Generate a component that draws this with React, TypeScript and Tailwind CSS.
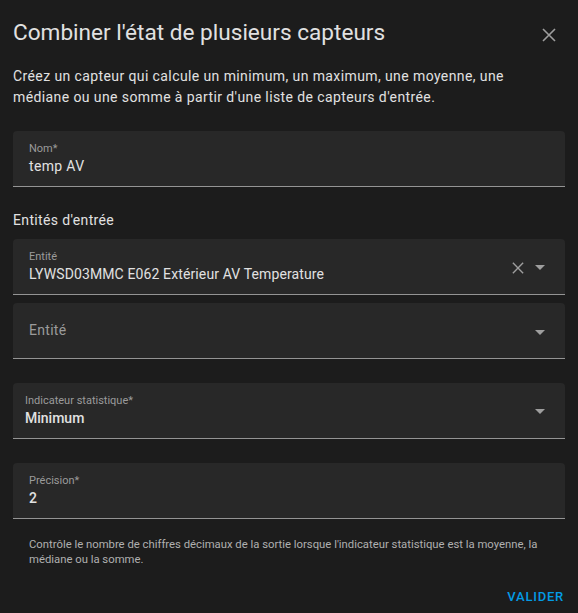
import React from "react";

const CloseIcon = ({ size = 14 }: { size?: number }) => (
  <svg width={size} height={size} viewBox="0 0 14 14">
    <path d="M1 1 L13 13 M13 1 L1 13" stroke="currentColor" strokeWidth="1.6" fill="none" />
  </svg>
);

const Caret = () => (
  <svg width="10" height="5" viewBox="0 0 10 5" className="text-[#9e9e9e]">
    <path d="M0 0 L10 0 L5 5 Z" fill="currentColor" />
  </svg>
);

export default function App() {
  return (
    <div
      className="w-[578px] h-[613px] bg-[#1c1c1c] text-[#e1e1e1] px-[13px] flex flex-col overflow-hidden"
      style={{ fontFamily: "Roboto, 'Noto Sans', sans-serif" }}
    >
      <div className="flex items-center justify-between h-[28px] mt-[19px]">
        <div className="text-[22.6px] leading-[28px] text-[#e1e1e1]">Combiner l'état de plusieurs capteurs</div>
        <div className="text-[#9e9e9e] mr-[9px] mt-[4px]">
          <CloseIcon size={14} />
        </div>
      </div>

      <div className="mt-[19px] pr-[16px] text-[14px] leading-[21px] tracking-[0.4px] text-[#e1e1e1]">
        Créez un capteur qui calcule un minimum, un maximum, une moyenne, une médiane ou une somme à partir d'une liste de capteurs d'entrée.
      </div>

      {/* Nom */}
      <div className="mt-[23px] h-[56px] bg-[#282828] rounded-t-[4px] border-b border-[#949494] relative">
        <div className="absolute left-[16px] top-[10px] text-[11px] leading-[16px] text-[#9b9b9b]">Nom*</div>
        <div className="absolute left-[16px] top-[23px] text-[14px] leading-[24px] tracking-[0.35px]">temp AV</div>
      </div>

      <div className="mt-[23px] text-[14px] leading-[20px] tracking-[0.35px]">Entités d'entrée</div>

      {/* Entité 1 */}
      <div className="mt-[9px] h-[56px] bg-[#282828] rounded-t-[4px] border-b border-[#949494] relative">
        <div className="absolute left-[16px] top-[10px] text-[11px] leading-[16px] text-[#9b9b9b]">Entité</div>
        <div className="absolute left-[16px] top-[23px] text-[14px] leading-[24px] tracking-[0.12px]">LYWSD03MMC E062 Extérieur AV Temperature</div>
        <div className="absolute right-[20px] top-0 h-[57px] flex items-center gap-[11px]">
          <div className="text-[#9e9e9e]">
            <CloseIcon size={12} />
          </div>
          <Caret />
        </div>
      </div>

      {/* Entité 2 */}
      <div className="mt-[8px] h-[56px] bg-[#282828] rounded-t-[4px] border-b border-[#949494] relative">
        <div className="absolute left-[16px] top-[15px] text-[14px] leading-[24px] tracking-[0.3px] text-[#9b9b9b]">Entité</div>
        <div className="absolute right-[20px] top-[27px] flex">
          <Caret />
        </div>
      </div>

      {/* Indicateur */}
      <div className="mt-[24px] h-[56px] bg-[#282828] rounded-t-[4px] border-b border-[#949494] relative">
        <div className="absolute left-[12px] top-[10px] text-[11px] leading-[16px] text-[#9b9b9b]">Indicateur statistique*</div>
        <div className="absolute left-[12px] top-[23px] text-[14px] leading-[24px] font-medium">Minimum</div>
        <div className="absolute right-[20px] top-[26px] flex">
          <Caret />
        </div>
      </div>

      {/* Précision */}
      <div className="mt-[24px] h-[56px] bg-[#282828] rounded-t-[4px] border-b border-[#949494] relative">
        <div className="absolute left-[16px] top-[10px] text-[11px] leading-[16px] text-[#9b9b9b]">Précision*</div>
        <div className="absolute left-[16px] top-[23px] text-[14px] leading-[24px] font-medium">2</div>
      </div>

      <div className="mt-[18px] pl-[16px] pr-[12px] text-[11.3px] leading-[15px] text-[#b0b0b0]">
        Contrôle le nombre de chiffres décimaux de la sortie lorsque l'indicateur statistique est la moyenne, la médiane ou la somme.
      </div>

      <div className="flex justify-end mt-[20px]">
        <div className="text-[13px] leading-[20px] font-medium tracking-[0.06em] text-[#039be5] mr-[1px]">VALIDER</div>
      </div>
    </div>
  );
}
